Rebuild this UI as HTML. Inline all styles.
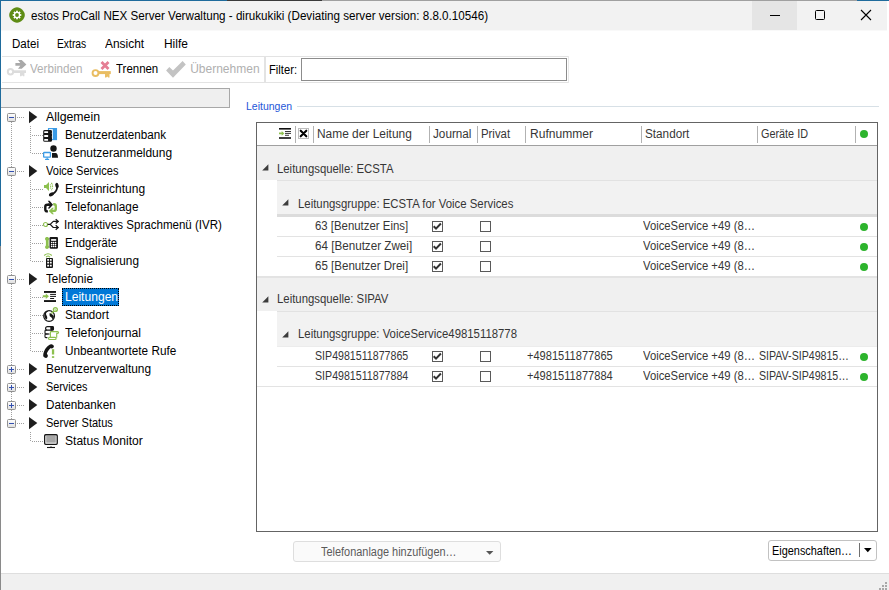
<!DOCTYPE html>
<html><head><meta charset="utf-8"><style>
html,body{margin:0;padding:0;width:889px;height:590px;overflow:hidden;background:#fff;}
body{position:relative;font-family:"Liberation Sans",sans-serif;font-size:11.6px;color:#000;}
.a{position:absolute;}
.t{position:absolute;font-size:12px;line-height:14px;white-space:nowrap;}
.dis{color:#b0b0b0;}
svg{position:absolute;overflow:visible;}
</style></head><body>
<div class="a" style="left:0px;top:0px;width:227px;height:1px;background:#1f6b9c;"></div>
<div class="a" style="left:227px;top:0px;width:95px;height:1px;background:#3a3a3a;"></div>
<div class="a" style="left:322px;top:0px;width:535px;height:1px;background:#a0a0a0;"></div>
<div class="a" style="left:857px;top:0px;width:32px;height:1px;background:#1f6b9c;"></div>
<div class="a" style="left:0px;top:0px;width:1px;height:246px;background:#1f6b9c;"></div>
<div class="a" style="left:0px;top:246px;width:1px;height:344px;background:#8a8a8a;"></div>
<div class="a" style="left:1px;top:1px;width:886px;height:29px;background:#f2f2f2;"></div>
<div class="a" style="left:1px;top:30px;width:886px;height:1px;background:#f9f9f9;"></div>
<div class="a" style="left:752px;top:1px;width:45px;height:29px;background:#e5e5e5;"></div>
<svg style="left:9px;top:7px" width="16" height="16" viewBox="0 0 16 16"><path d="M8 0.2C11.8 0.2 15.8 4.2 15.8 8C15.8 11.8 11.8 15.8 8 15.8C4.2 15.8 0.2 11.8 0.2 8C0.2 4.2 4.2 0.2 8 0.2Z" fill="#5e8c14"/>
<circle cx="8" cy="8" r="3.2" fill="#fff"/>
<g fill="#fff"><rect x="7.1" y="3.7" width="1.8" height="8.6"/><rect x="3.7" y="7.1" width="8.6" height="1.8"/><rect x="7.1" y="3.7" width="1.8" height="8.6" transform="rotate(45 8 8)"/><rect x="7.1" y="3.7" width="1.8" height="8.6" transform="rotate(-45 8 8)"/></g>
<circle cx="8" cy="8" r="1.9" fill="#5e8c14"/></svg>
<div class="t" style="left:31.40px;top:9px;font-size:12px;;transform:scaleX(0.9692);transform-origin:0 0;">estos ProCall NEX Server Verwaltung - dirukukiki (Deviating server version: 8.8.0.10546)</div>
<div class="a" style="left:770px;top:15px;width:10px;height:1px;background:#000;"></div>
<svg style="left:815px;top:10px" width="10" height="10" viewBox="0 0 10 10"><rect x="0.5" y="0.5" width="9" height="9" rx="1" fill="none" stroke="#000" stroke-width="1"/></svg>
<svg style="left:861px;top:10px" width="10" height="10" viewBox="0 0 10 10"><path d="M0 0L10 10M10 0L0 10" stroke="#000" stroke-width="1.1"/></svg>
<div class="t" style="left:12.40px;top:37px;font-size:12px;;transform:scaleX(0.9617);transform-origin:0 0;">Datei</div>
<div class="t" style="left:57.40px;top:37px;font-size:12px;;transform:scaleX(0.8586);transform-origin:0 0;">Extras</div>
<div class="t" style="left:105.30px;top:37px;font-size:12px;;transform:scaleX(0.9946);transform-origin:0 0;">Ansicht</div>
<div class="t" style="left:163.60px;top:37px;font-size:12px;;transform:scaleX(0.9946);transform-origin:0 0;">Hilfe</div>
<div class="a" style="left:2px;top:56px;width:567px;height:1px;background:#e3e3e3;"></div>
<div class="a" style="left:2px;top:82px;width:567px;height:1px;background:#e3e3e3;"></div>
<div class="a" style="left:568px;top:56px;width:1px;height:27px;background:#e8e8e8;"></div>
<div class="a" style="left:264px;top:57px;width:2px;height:25px;background:#e3e3e3;"></div>
<svg style="left:4px;top:57px" width="26" height="24" viewBox="0 0 26 24"><g fill="#dcdcdc"><path d="M6.5 11.1A3.7 3.7 0 1 0 6.5 18.5A3.7 3.7 0 1 0 6.5 11.1ZM6.5 13.1A1.7 1.7 0 1 1 6.5 16.5A1.7 1.7 0 1 1 6.5 13.1Z"/>
<rect x="9.6" y="13.3" width="12.4" height="2.7"/><path d="M16 15.5H20.4V19.3H19.1L18.2 18.2L17.3 19.3H16Z"/></g>
<path d="M11.4 6H16.3L14 3H17.7L22.4 7.4L17.7 11.8H14L16.3 8.8H11.4Z" fill="#a9a9a9"/></svg>
<div class="t dis" style="left:30.40px;top:62px;font-size:12px;;transform:scaleX(0.9687);transform-origin:0 0;">Verbinden</div>
<svg style="left:88px;top:57px" width="26" height="24" viewBox="0 0 26 24"><g fill="#e9bd62"><path d="M7.5 12.2A3.9 3.9 0 1 0 7.5 20A3.9 3.9 0 1 0 7.5 12.2ZM7.5 14.1A2 2 0 1 1 7.5 18.1A2 2 0 1 1 7.5 14.1Z"/>
<rect x="10.8" y="14.1" width="12" height="3"/><path d="M17 16.5H21.5V20.6H20.2L19.2 19.4L18.2 20.6H17Z"/></g>
<path d="M13.5 5L20.5 12M20.5 5L13.5 12" stroke="#e57e94" stroke-width="2.8"/></svg>
<div class="t" style="left:115.90px;top:62px;font-size:12px;;transform:scaleX(0.9547);transform-origin:0 0;">Trennen</div>
<svg style="left:162px;top:57px" width="28" height="24" viewBox="0 0 28 24"><path d="M4.1 13.4L7.3 10L11 13.6L20.6 4.1L23.8 7.5L11 20.8Z" fill="#c3c3c3"/></svg>
<div class="t dis" style="left:190.20px;top:62px;font-size:12px;;transform:scaleX(1.0000);transform-origin:0 0;">Übernehmen</div>
<div class="t" style="left:269.30px;top:63px;font-size:12px;;transform:scaleX(0.9337);transform-origin:0 0;">Filter:</div>
<div class="a" style="left:301px;top:58px;width:264px;height:21px;background:#fff;border:1px solid #8c8c8c"></div>
<div class="a" style="left:1px;top:88px;width:228px;height:18px;background:#efefef;border:1px solid #a8a8a8;border-left:0"></div>
<div class="t" style="left:245.80px;top:99px;font-size:10.6px;color:#2456d8;transform:scaleX(0.9904);transform-origin:0 0;">Leitungen</div>
<div class="a" style="left:297px;top:106px;width:582px;height:1px;background:#d7e0e6;"></div>
<div class="a" style="left:11px;top:122px;width:1px;height:297px;background:repeating-linear-gradient(to bottom,#a0a0a0 0 1px,transparent 1px 2px)"></div>
<div class="a" style="left:17px;top:117px;width:8px;height:1px;background:repeating-linear-gradient(to right,#a0a0a0 0 1px,transparent 1px 2px)"></div>
<svg style="left:7px;top:113px" width="9" height="9" viewBox="0 0 9 9"><rect x="0.5" y="0.5" width="8" height="8" rx="1" fill="url(#eg)" stroke="#919191"/><rect x="2" y="4" width="5" height="1" fill="#3350b0"/></svg>
<svg style="left:29px;top:111px" width="9" height="13" viewBox="0 0 9 13"><path d="M0 0L8.3 6.1L0 12.2Z" fill="#1e1e1e"/></svg>
<div class="t" style="left:46.30px;top:110px;font-size:12px;;transform:scaleX(1.0246);transform-origin:0 0;">Allgemein</div>
<div class="a" style="left:30px;top:126px;width:1px;height:28px;background:repeating-linear-gradient(to bottom,#a0a0a0 0 1px,transparent 1px 2px)"></div>
<div class="a" style="left:32px;top:135px;width:11px;height:1px;background:repeating-linear-gradient(to right,#a0a0a0 0 1px,transparent 1px 2px)"></div>
<div class="a" style="left:32px;top:153px;width:11px;height:1px;background:repeating-linear-gradient(to right,#a0a0a0 0 1px,transparent 1px 2px)"></div>
<div class="a" style="left:17px;top:171px;width:8px;height:1px;background:repeating-linear-gradient(to right,#a0a0a0 0 1px,transparent 1px 2px)"></div>
<svg style="left:7px;top:167px" width="9" height="9" viewBox="0 0 9 9"><rect x="0.5" y="0.5" width="8" height="8" rx="1" fill="url(#eg)" stroke="#919191"/><rect x="2" y="4" width="5" height="1" fill="#3350b0"/></svg>
<svg style="left:29px;top:165px" width="9" height="13" viewBox="0 0 9 13"><path d="M0 0L8.3 6.1L0 12.2Z" fill="#1e1e1e"/></svg>
<div class="t" style="left:46.30px;top:164px;font-size:12px;;transform:scaleX(0.9199);transform-origin:0 0;">Voice Services</div>
<div class="a" style="left:30px;top:180px;width:1px;height:82px;background:repeating-linear-gradient(to bottom,#a0a0a0 0 1px,transparent 1px 2px)"></div>
<div class="a" style="left:32px;top:189px;width:11px;height:1px;background:repeating-linear-gradient(to right,#a0a0a0 0 1px,transparent 1px 2px)"></div>
<div class="a" style="left:32px;top:207px;width:11px;height:1px;background:repeating-linear-gradient(to right,#a0a0a0 0 1px,transparent 1px 2px)"></div>
<div class="a" style="left:32px;top:225px;width:11px;height:1px;background:repeating-linear-gradient(to right,#a0a0a0 0 1px,transparent 1px 2px)"></div>
<div class="a" style="left:32px;top:243px;width:11px;height:1px;background:repeating-linear-gradient(to right,#a0a0a0 0 1px,transparent 1px 2px)"></div>
<div class="a" style="left:32px;top:261px;width:11px;height:1px;background:repeating-linear-gradient(to right,#a0a0a0 0 1px,transparent 1px 2px)"></div>
<div class="a" style="left:17px;top:279px;width:8px;height:1px;background:repeating-linear-gradient(to right,#a0a0a0 0 1px,transparent 1px 2px)"></div>
<svg style="left:7px;top:275px" width="9" height="9" viewBox="0 0 9 9"><rect x="0.5" y="0.5" width="8" height="8" rx="1" fill="url(#eg)" stroke="#919191"/><rect x="2" y="4" width="5" height="1" fill="#3350b0"/></svg>
<svg style="left:29px;top:273px" width="9" height="13" viewBox="0 0 9 13"><path d="M0 0L8.3 6.1L0 12.2Z" fill="#1e1e1e"/></svg>
<div class="t" style="left:46.30px;top:272px;font-size:12px;;transform:scaleX(0.9781);transform-origin:0 0;">Telefonie</div>
<div class="a" style="left:30px;top:288px;width:1px;height:64px;background:repeating-linear-gradient(to bottom,#a0a0a0 0 1px,transparent 1px 2px)"></div>
<div class="a" style="left:32px;top:297px;width:11px;height:1px;background:repeating-linear-gradient(to right,#a0a0a0 0 1px,transparent 1px 2px)"></div>
<div class="a" style="left:32px;top:315px;width:11px;height:1px;background:repeating-linear-gradient(to right,#a0a0a0 0 1px,transparent 1px 2px)"></div>
<div class="a" style="left:32px;top:333px;width:11px;height:1px;background:repeating-linear-gradient(to right,#a0a0a0 0 1px,transparent 1px 2px)"></div>
<div class="a" style="left:32px;top:351px;width:11px;height:1px;background:repeating-linear-gradient(to right,#a0a0a0 0 1px,transparent 1px 2px)"></div>
<div class="a" style="left:17px;top:369px;width:8px;height:1px;background:repeating-linear-gradient(to right,#a0a0a0 0 1px,transparent 1px 2px)"></div>
<svg style="left:7px;top:365px" width="9" height="9" viewBox="0 0 9 9"><rect x="0.5" y="0.5" width="8" height="8" rx="1" fill="url(#eg)" stroke="#919191"/><rect x="2" y="4" width="5" height="1" fill="#3350b0"/><rect x="4" y="2" width="1" height="5" fill="#3350b0"/></svg>
<svg style="left:29px;top:363px" width="9" height="13" viewBox="0 0 9 13"><path d="M0 0L8.3 6.1L0 12.2Z" fill="#1e1e1e"/></svg>
<div class="t" style="left:46.30px;top:362px;font-size:12px;;transform:scaleX(0.9906);transform-origin:0 0;">Benutzerverwaltung</div>
<div class="a" style="left:17px;top:387px;width:8px;height:1px;background:repeating-linear-gradient(to right,#a0a0a0 0 1px,transparent 1px 2px)"></div>
<svg style="left:7px;top:383px" width="9" height="9" viewBox="0 0 9 9"><rect x="0.5" y="0.5" width="8" height="8" rx="1" fill="url(#eg)" stroke="#919191"/><rect x="2" y="4" width="5" height="1" fill="#3350b0"/><rect x="4" y="2" width="1" height="5" fill="#3350b0"/></svg>
<svg style="left:29px;top:381px" width="9" height="13" viewBox="0 0 9 13"><path d="M0 0L8.3 6.1L0 12.2Z" fill="#1e1e1e"/></svg>
<div class="t" style="left:46.30px;top:380px;font-size:12px;;transform:scaleX(0.8997);transform-origin:0 0;">Services</div>
<div class="a" style="left:17px;top:405px;width:8px;height:1px;background:repeating-linear-gradient(to right,#a0a0a0 0 1px,transparent 1px 2px)"></div>
<svg style="left:7px;top:401px" width="9" height="9" viewBox="0 0 9 9"><rect x="0.5" y="0.5" width="8" height="8" rx="1" fill="url(#eg)" stroke="#919191"/><rect x="2" y="4" width="5" height="1" fill="#3350b0"/><rect x="4" y="2" width="1" height="5" fill="#3350b0"/></svg>
<svg style="left:29px;top:399px" width="9" height="13" viewBox="0 0 9 13"><path d="M0 0L8.3 6.1L0 12.2Z" fill="#1e1e1e"/></svg>
<div class="t" style="left:46.30px;top:398px;font-size:12px;;transform:scaleX(0.9757);transform-origin:0 0;">Datenbanken</div>
<div class="a" style="left:17px;top:423px;width:8px;height:1px;background:repeating-linear-gradient(to right,#a0a0a0 0 1px,transparent 1px 2px)"></div>
<svg style="left:7px;top:419px" width="9" height="9" viewBox="0 0 9 9"><rect x="0.5" y="0.5" width="8" height="8" rx="1" fill="url(#eg)" stroke="#919191"/><rect x="2" y="4" width="5" height="1" fill="#3350b0"/></svg>
<svg style="left:29px;top:417px" width="9" height="13" viewBox="0 0 9 13"><path d="M0 0L8.3 6.1L0 12.2Z" fill="#1e1e1e"/></svg>
<div class="t" style="left:46.30px;top:416px;font-size:12px;;transform:scaleX(0.9189);transform-origin:0 0;">Server Status</div>
<div class="a" style="left:30px;top:432px;width:1px;height:10px;background:repeating-linear-gradient(to bottom,#a0a0a0 0 1px,transparent 1px 2px)"></div>
<div class="a" style="left:32px;top:441px;width:11px;height:1px;background:repeating-linear-gradient(to right,#a0a0a0 0 1px,transparent 1px 2px)"></div>
<svg width="0" height="0" style="left:0;top:0"><defs><linearGradient id="eg" x1="0" y1="0" x2="0" y2="1"><stop offset="0" stop-color="#ffffff"/><stop offset="1" stop-color="#dedede"/></linearGradient></defs></svg>
<div class="t" style="left:65.20px;top:128px;font-size:12px;;transform:scaleX(0.9707);transform-origin:0 0;">Benutzerdatenbank</div>
<svg style="left:43px;top:128px" width="16" height="16" viewBox="0 0 16 16"><rect x="5.5" y="0.6" width="8" height="11" fill="#fff" stroke="#3a9be6" stroke-width="1.1"/>
<path d="M9.8 0.1H13.2Q14 0.1 14 1V2.6Q13.2 3.3 14 4V6.5Q13.2 7.2 14 7.9V11.7H9.8Z" fill="#3a9be6"/>
<path d="M1.7 2.1H7.6Q9 2.1 9 3.5V4.5Q8.4 5.1 9 5.9V8.3Q8.4 8.9 9 9.6V12.4Q9 13.8 7.6 13.8H1.7Q0.2 13.8 0.2 12.4V3.5Q0.2 2.1 1.7 2.1Z" fill="#161616"/>
<rect x="1.2" y="3.2" width="3.9" height="1.9" rx="0.5" fill="#fff"/><rect x="1.2" y="7.1" width="3.9" height="1.9" rx="0.5" fill="#fff"/><rect x="1.2" y="10.9" width="3.9" height="1.9" rx="0.5" fill="#fff"/></svg>
<div class="t" style="left:65.20px;top:146px;font-size:12px;;transform:scaleX(0.9969);transform-origin:0 0;">Benutzeranmeldung</div>
<svg style="left:43px;top:146px" width="16" height="16" viewBox="0 0 16 16"><circle cx="10.5" cy="2.5" r="3.2" fill="#161616"/>
<path d="M9 7H12.6C14 7 15 8.6 15 11.7H9Z" fill="#161616"/>
<rect x="0.65" y="6.5" width="6.8" height="4.7" rx="0.6" fill="#fff" stroke="#3a9be6" stroke-width="1.3"/>
<rect x="2" y="12.8" width="4.2" height="1.1" rx="0.5" fill="#3a9be6"/><rect x="3.6" y="11.5" width="1.1" height="1.6" fill="#3a9be6"/></svg>
<div class="t" style="left:65.20px;top:182px;font-size:12px;;transform:scaleX(1.0004);transform-origin:0 0;">Ersteinrichtung</div>
<svg style="left:43px;top:182px" width="16" height="16" viewBox="0 0 16 16"><path d="M1 3H3L6 0.1V8.9L3 5.9H1Z" fill="#8dc04f"/>
<path d="M7.1 2.4Q8.3 4.5 7.1 6.6M8.4 0.9Q10.7 4.5 8.4 8.1" fill="none" stroke="#8dc04f" stroke-width="1.1" stroke-dasharray="1.1 0.6"/>
<path d="M14.3 5.2Q13.6 10 9.6 12" fill="none" stroke="#161616" stroke-width="1.7"/>
<ellipse cx="14" cy="3.6" rx="1.7" ry="2.8" transform="rotate(-15 14 3.6)" fill="#161616"/>
<ellipse cx="8.4" cy="12.4" rx="2.7" ry="1.7" transform="rotate(-25 8.4 12.4)" fill="#161616"/></svg>
<div class="t" style="left:65.20px;top:200px;font-size:12px;;transform:scaleX(0.9833);transform-origin:0 0;">Telefonanlage</div>
<svg style="left:43px;top:200px" width="16" height="16" viewBox="0 0 16 16"><path d="M6 4.7H4.2Q2.3 4.7 2.3 6.6V9.5Q2.3 11.4 4.2 11.4H4.9" fill="none" stroke="#161616" stroke-width="2.4"/>
<path d="M4.8 0.8H6.6L10 4.7L6.6 8.5H4.8L6.6 6H5V3.4H6.6Z" fill="#161616"/>
<path d="M10.2 4.3H10.9Q12.8 4.3 12.8 6.2V9Q12.8 10.9 10.9 10.9H9.4" fill="none" stroke="#8dc04f" stroke-width="2.4"/>
<path d="M11 7.8H9.2L5.8 11L9.2 14.2H11L9.2 12.2H10.4V9.8H9.2Z" fill="#8dc04f"/></svg>
<div class="t" style="left:64.24px;top:218px;font-size:12px;;transform:scaleX(0.9628);transform-origin:0 0;">Interaktives Sprachmenü (IVR)</div>
<svg style="left:43px;top:218px" width="16" height="16" viewBox="0 0 16 16"><circle cx="2.5" cy="6.5" r="2" fill="none" stroke="#8dc04f" stroke-width="1.2"/>
<path d="M4.6 6.4H7.2L10.3 3.3H15.4M7.2 6.4L10.3 9.5H15.4" fill="none" stroke="#161616" stroke-width="1.2" stroke-linejoin="round"/>
<path d="M12.7 1.2L15.2 3.4L12.7 5.6M12.7 7.3L15.2 9.5L12.7 11.7" fill="none" stroke="#161616" stroke-width="1.3"/></svg>
<div class="t" style="left:65.20px;top:236px;font-size:12px;;transform:scaleX(0.9407);transform-origin:0 0;">Endgeräte</div>
<svg style="left:43px;top:236px" width="16" height="16" viewBox="0 0 16 16"><path d="M4 1C1.8 1 1.6 3.4 2.9 4.4V9.5C1.6 10.5 1.8 12.9 4 12.9C6.3 12.9 6.5 10.5 5.6 9.5V4.4C6.5 3.4 6.3 1 4 1Z" fill="#8dc04f"/>
<rect x="6.5" y="1.1" width="8.5" height="11.6" rx="1.1" fill="#161616"/>
<rect x="8.1" y="3.1" width="5.1" height="1.7" fill="#fff"/>
<g fill="#fff"><circle cx="8.7" cy="6.5" r="0.8"/><circle cx="10.6" cy="6.5" r="0.8"/><circle cx="12.5" cy="6.5" r="0.8"/>
<circle cx="8.7" cy="8.5" r="0.8"/><circle cx="10.6" cy="8.5" r="0.8"/><circle cx="12.5" cy="8.5" r="0.8"/>
<circle cx="8.7" cy="10.4" r="0.8"/><circle cx="10.6" cy="10.4" r="0.8"/><circle cx="12.5" cy="10.4" r="0.8"/></g></svg>
<div class="t" style="left:65.20px;top:254px;font-size:12px;;transform:scaleX(0.9812);transform-origin:0 0;">Signalisierung</div>
<svg style="left:43px;top:254px" width="16" height="16" viewBox="0 0 16 16"><path d="M1.5 1.2Q5 -1.6 8.5 1.2M3.4 2.9Q5 1.2 6.6 2.9" fill="none" stroke="#8dc04f" stroke-width="1.1" stroke-linecap="round"/>
<rect x="3" y="3.9" width="7" height="10" rx="0.9" fill="#161616"/>
<g fill="#fff"><rect x="4.2" y="4.9" width="1.8" height="1.8" rx="0.3"/><rect x="6.9" y="4.9" width="1.8" height="1.8" rx="0.3"/><rect x="4.2" y="7.8" width="1.8" height="1.8" rx="0.3"/><rect x="6.9" y="7.8" width="1.8" height="1.8" rx="0.3"/><rect x="4.2" y="10.7" width="1.8" height="1.8" rx="0.3"/><rect x="6.9" y="10.7" width="1.8" height="1.8" rx="0.3"/></g></svg>
<div class="a" style="left:62px;top:288px;width:57px;height:18px;background:#0078d7;"></div>
<div class="a" style="left:62px;top:288px;width:55px;height:16px;border:1px dotted #000"></div>
<div class="t" style="left:65.20px;top:290px;font-size:12px;color:#fff;transform:scaleX(1.0069);transform-origin:0 0;">Leitungen</div>
<svg style="left:43px;top:290px" width="16" height="16" viewBox="0 0 16 16"><rect x="1" y="1" width="12" height="1.9" fill="#161616"/><rect x="1" y="10.1" width="12" height="1.9" fill="#161616"/>
<rect x="7.1" y="3.9" width="5.9" height="1" fill="#161616"/><rect x="7.1" y="5.9" width="5.9" height="1" fill="#161616"/><rect x="7.1" y="8" width="4" height="1" fill="#161616"/>
<path d="M-0.2 5.3H2.8V3.6L5.9 6.3L2.8 9V7.3H-0.2Z" fill="#8dc04f"/></svg>
<div class="t" style="left:65.20px;top:308px;font-size:12px;;transform:scaleX(0.9668);transform-origin:0 0;">Standort</div>
<svg style="left:43px;top:308px" width="16" height="16" viewBox="0 0 16 16"><circle cx="6.1" cy="8" r="5.4" fill="none" stroke="#161616" stroke-width="1.2"/>
<path d="M2 4.2C3 3.3 4.2 2.9 5.2 3.2C4.8 3.8 3.6 4.2 3.2 5C2.8 5.8 3.2 6.8 3.6 7.6C4 8.4 4.4 9.4 4.2 10.4C4 11 3.6 11.4 3.2 11.6C1.8 10.6 1.2 8.6 1.3 6.6Z" fill="#161616"/>
<path d="M6.5 5.4C7.6 5.2 8.4 5.8 9.1 6.4C9.8 6.9 10.8 7.2 10.9 8.4C10.9 9.6 10.5 10.8 9.6 11.6C9.4 10.8 9.1 10.2 8.5 9.6C7.8 9 6.8 8.6 6.6 7.6C6.4 6.9 6.7 6.2 6.5 5.4Z" fill="#161616"/>
<path d="M8.4 5.5L11 3" stroke="#8dc04f" stroke-width="1.5"/>
<circle cx="12.4" cy="1.5" r="2.6" fill="#8dc04f"/><path d="M11.7 2.8V0.7H12.7Q13.5 0.7 13.5 1.35Q13.5 2 12.7 2H11.7" fill="none" stroke="#fff" stroke-width="0.7"/></svg>
<div class="t" style="left:65.20px;top:326px;font-size:12px;;transform:scaleX(1.0182);transform-origin:0 0;">Telefonjournal</div>
<svg style="left:43px;top:326px" width="16" height="16" viewBox="0 0 16 16"><path d="M4.2 4.1H2.9Q2 4.1 2 5V7.3Q2 8 2.9 8H4.6M4.4 8H2.9Q2 8 2 8.8V10.7Q2 11.6 2.9 11.6H4.4" fill="none" stroke="#161616" stroke-width="1.1"/>
<rect x="2.6" y="0.6" width="7.9" height="3.5" rx="1.7" fill="#fff" stroke="#161616" stroke-width="1.2"/>
<rect x="7.3" y="0" width="3.7" height="4.6" rx="1.6" fill="#161616"/>
<rect x="2" y="7.4" width="4.5" height="1.2" fill="#161616"/>
<path d="M7.4 5.6H14.5Q15.6 5.6 15.6 6.6Q15.6 7.4 14.6 7.4H13.7V11.8" fill="none" stroke="#8dc04f" stroke-width="1.1"/>
<path d="M7.4 5.6V11.2" fill="none" stroke="#8dc04f" stroke-width="1.1"/>
<rect x="5.5" y="11.4" width="7.6" height="2.1" rx="1" fill="#fff" stroke="#8dc04f" stroke-width="1.1"/></svg>
<div class="t" style="left:65.20px;top:344px;font-size:12px;;transform:scaleX(0.9813);transform-origin:0 0;">Unbeantwortete Rufe</div>
<svg style="left:43px;top:344px" width="16" height="16" viewBox="0 0 16 16"><path d="M8.2 0.3C9.3 0.1 10.8 1.2 10.9 2.3C11 3.4 9.8 4.4 8.6 4.4C8 4.3 7.6 3.9 7.1 4.4C5.6 5.8 4.4 7.8 3.9 9.6C3.8 10.2 4.4 10.4 4.7 11C5.2 12 4.6 13.7 3.2 13.9C2 14 0.4 13.2 0.2 11.8C0 9.2 1.4 5.6 3.8 3C5.2 1.5 6.6 0.6 8.2 0.3Z" fill="#161616"/>
<rect x="8.9" y="5.2" width="2.3" height="5.3" fill="#8dc04f"/><rect x="8.9" y="12.2" width="2.3" height="1.7" fill="#8dc04f"/></svg>
<div class="t" style="left:65.20px;top:434px;font-size:12px;;transform:scaleX(1.0055);transform-origin:0 0;">Status Monitor</div>
<svg style="left:43px;top:434px" width="16" height="16" viewBox="0 0 16 16"><rect x="1.65" y="0.75" width="12.6" height="9.6" rx="1" fill="#fff" stroke="#161616" stroke-width="1.3"/>
<rect x="3.2" y="2" width="9.6" height="6.7" fill="#a6a6a6"/>
<path d="M4 13.5H12" stroke="#161616" stroke-width="1.1"/><path d="M6.4 13.2Q8 11.8 9.6 13.2Z" fill="#161616"/></svg>
<div class="a" style="left:256px;top:122px;width:622px;height:410px;background:#fff;box-sizing:border-box;border:1px solid #646464"></div>
<div class="a" style="left:257px;top:145px;width:620px;height:1px;background:#a0a0a0;"></div>
<div class="a" style="left:295px;top:126px;width:1px;height:17px;background:#b2b2b2;"></div>
<div class="a" style="left:313px;top:126px;width:1px;height:17px;background:#b2b2b2;"></div>
<div class="a" style="left:429px;top:126px;width:1px;height:17px;background:#b2b2b2;"></div>
<div class="a" style="left:477px;top:126px;width:1px;height:17px;background:#b2b2b2;"></div>
<div class="a" style="left:525px;top:126px;width:1px;height:17px;background:#b2b2b2;"></div>
<div class="a" style="left:641px;top:126px;width:1px;height:17px;background:#b2b2b2;"></div>
<div class="a" style="left:757px;top:126px;width:1px;height:17px;background:#b2b2b2;"></div>
<div class="a" style="left:855px;top:126px;width:1px;height:17px;background:#b2b2b2;"></div>
<svg style="left:279px;top:128px" width="13" height="11" viewBox="0 0 13 11"><rect x="0" y="0" width="12" height="1.6" fill="#111"/><rect x="0" y="9.2" width="12" height="1.6" fill="#111"/><rect x="6" y="3" width="6" height="0.9" fill="#222"/><rect x="6" y="4.9" width="6" height="0.9" fill="#222"/><rect x="6" y="6.8" width="4" height="0.9" fill="#222"/><path d="M0 4.6H2.7V3.1L5.3 5.4L2.7 7.7V6.2H0Z" fill="#8cc04d"/></svg>
<svg style="left:298px;top:128px" width="11" height="11" viewBox="0 0 11 11"><rect x="0.5" y="0.5" width="10" height="10" fill="#fff" stroke="#bdbdbd"/><path d="M2.7 2.7L8.3 8.3M8.3 2.7L2.7 8.3" stroke="#000" stroke-width="2.1" stroke-linecap="round"/></svg>
<div class="t" style="left:317.40px;top:127px;font-size:12px;color:#363636;transform:scaleX(0.9935);transform-origin:0 0;">Name der Leitung</div>
<div class="t" style="left:432.90px;top:127px;font-size:12px;color:#363636;transform:scaleX(0.9770);transform-origin:0 0;">Journal</div>
<div class="t" style="left:481.20px;top:127px;font-size:12px;color:#363636;transform:scaleX(0.9477);transform-origin:0 0;">Privat</div>
<div class="t" style="left:529.60px;top:127px;font-size:12px;color:#363636;transform:scaleX(1.0050);transform-origin:0 0;">Rufnummer</div>
<div class="t" style="left:645.10px;top:127px;font-size:12px;color:#363636;transform:scaleX(0.9776);transform-origin:0 0;">Standort</div>
<div class="t" style="left:761.30px;top:127px;font-size:12px;color:#363636;transform:scaleX(0.9035);transform-origin:0 0;">Geräte ID</div>
<div class="a" style="left:860px;top:130px;width:8px;height:8px;border-radius:50%;background:#2db42d"></div>
<div class="a" style="left:257px;top:146px;width:620px;height:34px;background:#f0f0f0;"></div>
<svg style="left:262px;top:164px" width="7" height="7" viewBox="0 0 7 7"><path d="M6.4 0.2V6.4H0.2Z" fill="#3c3c3c"/></svg>
<div class="t" style="left:277.40px;top:162px;font-size:12px;color:#363636;transform:scaleX(0.9458);transform-origin:0 0;">Leitungsquelle: ECSTA</div>
<div class="a" style="left:277px;top:180px;width:600px;height:1px;background:#e2e2e2;"></div>
<div class="a" style="left:277px;top:181px;width:600px;height:33px;background:#f2f2f2;"></div>
<div class="a" style="left:277px;top:214px;width:600px;height:3px;background:#dcdcdc;"></div>
<svg style="left:282px;top:199px" width="7" height="7" viewBox="0 0 7 7"><path d="M6.4 0.2V6.4H0.2Z" fill="#3c3c3c"/></svg>
<div class="t" style="left:297.70px;top:197px;font-size:12px;color:#363636;transform:scaleX(0.9478);transform-origin:0 0;">Leitungsgruppe: ECSTA for Voice Services</div>
<div class="a" style="left:277px;top:236px;width:600px;height:1px;background:#e3e3e3;"></div>
<div class="t" style="left:314.90px;top:219px;font-size:12px;color:#363636;transform:scaleX(0.9496);transform-origin:0 0;">63 [Benutzer Eins]</div>
<svg style="left:432px;top:221px" width="11" height="11" viewBox="0 0 11 11"><rect x="0.5" y="0.5" width="10" height="10" fill="#fff" stroke="#5a5a5a" stroke-width="1"/><path d="M1.7 5.3L4 7.6L8.9 2.5" fill="none" stroke="#333" stroke-width="2"/></svg>
<svg style="left:480px;top:221px" width="11" height="11" viewBox="0 0 11 11"><rect x="0.5" y="0.5" width="10" height="10" fill="#fff" stroke="#5a5a5a" stroke-width="1"/></svg>
<div class="t" style="left:642.70px;top:219px;font-size:12px;color:#363636;transform:scaleX(0.9402);transform-origin:0 0;">VoiceService +49 (8…</div>
<div class="a" style="left:860px;top:223px;width:8px;height:8px;border-radius:50%;background:#2db42d"></div>
<div class="a" style="left:277px;top:256px;width:600px;height:1px;background:#e3e3e3;"></div>
<div class="t" style="left:314.90px;top:239px;font-size:12px;color:#363636;transform:scaleX(0.9708);transform-origin:0 0;">64 [Benutzer Zwei]</div>
<svg style="left:432px;top:241px" width="11" height="11" viewBox="0 0 11 11"><rect x="0.5" y="0.5" width="10" height="10" fill="#fff" stroke="#5a5a5a" stroke-width="1"/><path d="M1.7 5.3L4 7.6L8.9 2.5" fill="none" stroke="#333" stroke-width="2"/></svg>
<svg style="left:480px;top:241px" width="11" height="11" viewBox="0 0 11 11"><rect x="0.5" y="0.5" width="10" height="10" fill="#fff" stroke="#5a5a5a" stroke-width="1"/></svg>
<div class="t" style="left:642.70px;top:239px;font-size:12px;color:#363636;transform:scaleX(0.9402);transform-origin:0 0;">VoiceService +49 (8…</div>
<div class="a" style="left:860px;top:243px;width:8px;height:8px;border-radius:50%;background:#2db42d"></div>
<div class="t" style="left:314.90px;top:259px;font-size:12px;color:#363636;transform:scaleX(0.9628);transform-origin:0 0;">65 [Benutzer Drei]</div>
<svg style="left:432px;top:261px" width="11" height="11" viewBox="0 0 11 11"><rect x="0.5" y="0.5" width="10" height="10" fill="#fff" stroke="#5a5a5a" stroke-width="1"/><path d="M1.7 5.3L4 7.6L8.9 2.5" fill="none" stroke="#333" stroke-width="2"/></svg>
<svg style="left:480px;top:261px" width="11" height="11" viewBox="0 0 11 11"><rect x="0.5" y="0.5" width="10" height="10" fill="#fff" stroke="#5a5a5a" stroke-width="1"/></svg>
<div class="t" style="left:642.70px;top:259px;font-size:12px;color:#363636;transform:scaleX(0.9402);transform-origin:0 0;">VoiceService +49 (8…</div>
<div class="a" style="left:860px;top:263px;width:8px;height:8px;border-radius:50%;background:#2db42d"></div>
<div class="a" style="left:257px;top:276px;width:620px;height:2px;background:#e3e3e3;"></div>
<div class="a" style="left:257px;top:278px;width:620px;height:33px;background:#f0f0f0;"></div>
<div class="a" style="left:277px;top:311px;width:600px;height:1px;background:#e2e2e2;"></div>
<svg style="left:262px;top:296px" width="7" height="7" viewBox="0 0 7 7"><path d="M6.4 0.2V6.4H0.2Z" fill="#3c3c3c"/></svg>
<div class="t" style="left:277.40px;top:292px;font-size:12px;color:#363636;transform:scaleX(0.9470);transform-origin:0 0;">Leitungsquelle: SIPAV</div>
<div class="a" style="left:277px;top:312px;width:600px;height:34px;background:#f2f2f2;"></div>
<div class="a" style="left:277px;top:346px;width:600px;height:1px;background:#ececec;"></div>
<svg style="left:282px;top:331px" width="7" height="7" viewBox="0 0 7 7"><path d="M6.4 0.2V6.4H0.2Z" fill="#3c3c3c"/></svg>
<div class="t" style="left:297.70px;top:327px;font-size:12px;color:#363636;transform:scaleX(0.9468);transform-origin:0 0;">Leitungsgruppe: VoiceService49815118778</div>
<div class="a" style="left:277px;top:366px;width:600px;height:1px;background:#e3e3e3;"></div>
<div class="t" style="left:314.90px;top:349px;font-size:12px;color:#363636;transform:scaleX(0.8859);transform-origin:0 0;">SIP4981511877865</div>
<svg style="left:432px;top:351px" width="11" height="11" viewBox="0 0 11 11"><rect x="0.5" y="0.5" width="10" height="10" fill="#fff" stroke="#5a5a5a" stroke-width="1"/><path d="M1.7 5.3L4 7.6L8.9 2.5" fill="none" stroke="#333" stroke-width="2"/></svg>
<svg style="left:480px;top:351px" width="11" height="11" viewBox="0 0 11 11"><rect x="0.5" y="0.5" width="10" height="10" fill="#fff" stroke="#5a5a5a" stroke-width="1"/></svg>
<div class="t" style="left:527.30px;top:349px;font-size:12px;color:#363636;transform:scaleX(0.9227);transform-origin:0 0;">+4981511877865</div>
<div class="t" style="left:642.70px;top:349px;font-size:12px;color:#363636;transform:scaleX(0.9402);transform-origin:0 0;">VoiceService +49 (8…</div>
<div class="t" style="left:759.00px;top:349px;font-size:12px;color:#363636;transform:scaleX(0.8846);transform-origin:0 0;">SIPAV-SIP49815…</div>
<div class="a" style="left:860px;top:353px;width:8px;height:8px;border-radius:50%;background:#2db42d"></div>
<div class="t" style="left:314.90px;top:369px;font-size:12px;color:#363636;transform:scaleX(0.8859);transform-origin:0 0;">SIP4981511877884</div>
<svg style="left:432px;top:371px" width="11" height="11" viewBox="0 0 11 11"><rect x="0.5" y="0.5" width="10" height="10" fill="#fff" stroke="#5a5a5a" stroke-width="1"/><path d="M1.7 5.3L4 7.6L8.9 2.5" fill="none" stroke="#333" stroke-width="2"/></svg>
<svg style="left:480px;top:371px" width="11" height="11" viewBox="0 0 11 11"><rect x="0.5" y="0.5" width="10" height="10" fill="#fff" stroke="#5a5a5a" stroke-width="1"/></svg>
<div class="t" style="left:527.30px;top:369px;font-size:12px;color:#363636;transform:scaleX(0.9227);transform-origin:0 0;">+4981511877884</div>
<div class="t" style="left:642.70px;top:369px;font-size:12px;color:#363636;transform:scaleX(0.9402);transform-origin:0 0;">VoiceService +49 (8…</div>
<div class="t" style="left:759.00px;top:369px;font-size:12px;color:#363636;transform:scaleX(0.8846);transform-origin:0 0;">SIPAV-SIP49815…</div>
<div class="a" style="left:860px;top:373px;width:8px;height:8px;border-radius:50%;background:#2db42d"></div>
<div class="a" style="left:257px;top:386px;width:620px;height:1px;background:#e3e3e3;"></div>
<div class="a" style="left:293px;top:541px;width:208px;height:21px;background:#fafafa;box-sizing:border-box;border:1px solid #dedede;border-radius:3px"></div>
<div class="t" style="left:320.80px;top:545px;font-size:12px;color:#5a5a5a;transform:scaleX(0.9108);transform-origin:0 0;">Telefonanlage hinzufügen…</div>
<svg style="left:486px;top:551px" width="8" height="4" viewBox="0 0 8 4"><path d="M0 0H7.4L3.7 3.8Z" fill="#555"/></svg>
<div class="a" style="left:768px;top:540px;width:109px;height:21px;background:#fff;box-sizing:border-box;border:1px solid #c2c2c2;border-radius:3px"></div>
<div class="t" style="left:771.50px;top:544px;font-size:12px;;transform:scaleX(0.9086);transform-origin:0 0;">Eigenschaften…</div>
<div class="a" style="left:859px;top:543px;width:1px;height:14px;background:#707070;"></div>
<svg style="left:864px;top:548px" width="8" height="5" viewBox="0 0 8 5"><path d="M0 0H7.6L3.8 4.2Z" fill="#000"/></svg>
<div class="a" style="left:1px;top:573px;width:888px;height:17px;background:#f0f0f0;border-top:1px solid #dedede"></div>
<div class="a" style="left:885px;top:582px;width:2px;height:2px;background:#a8a8a8;"></div>
<div class="a" style="left:882px;top:585px;width:2px;height:2px;background:#a8a8a8;"></div>
<div class="a" style="left:885px;top:585px;width:2px;height:2px;background:#a8a8a8;"></div>
<div class="a" style="left:879px;top:588px;width:2px;height:2px;background:#a8a8a8;"></div>
<div class="a" style="left:882px;top:588px;width:2px;height:2px;background:#a8a8a8;"></div>
<div class="a" style="left:885px;top:588px;width:2px;height:2px;background:#a8a8a8;"></div>

</body></html>
